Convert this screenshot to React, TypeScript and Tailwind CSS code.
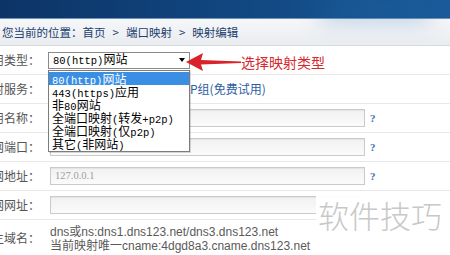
import React from "react";

const cjk = "font-['Noto_Sans_CJK_SC',sans-serif]";

// SimSun-ish look: ascii runs in a mono face, Chinese in the CJK face
const Mixed = ({ text }: { text: string }) => {
  const parts = text.split(/([\x20-\x7e]+)/).filter(Boolean);
  return (
    <>
      {parts.map((p, i) =>
        /^[\x20-\x7e]+$/.test(p) ? (
          <span key={i} className="font-['Liberation_Mono',monospace] text-[10.5px] leading-[13px]">
            {p}
          </span>
        ) : (
          <span key={i} className="leading-[13px]">{p}</span>
        )
      )}
    </>
  );
};

const options = [
  "80(http)网站",
  "443(https)应用",
  "非80网站",
  "全端口映射(转发+p2p)",
  "全端口映射(仅p2p)",
  "其它(非网站)",
];

const Help = () => (
  <span className="ml-[5px] text-[11px] leading-[14px] font-bold text-[#3d6fae] font-['Liberation_Serif',serif]">?</span>
);

const Row = ({
  label,
  children,
  className = "h-[29px]",
}: {
  label: string;
  children?: React.ReactNode;
  className?: string;
}) => (
  <div className={`flex items-center border-b border-[#e8e8e8] ${className}`}>
    <div className="w-[40px] shrink-0 flex justify-end whitespace-nowrap text-[12px] leading-[16px] text-[#555]">
      {label}
    </div>
    <div className="pl-[10px] flex items-center flex-1">{children}</div>
  </div>
);

const Field = ({ value, help = true }: { value?: string; help?: boolean }) => (
  <div className="flex items-center">
    <div className="w-[315px] h-[18px] border border-[#cacaca] bg-linear-to-b from-[#f1f1f1] to-[#fbfbfb] shadow-[inset_0_1px_1px_rgba(0,0,0,0.06)] flex items-center pl-[4px] text-[10.5px] leading-[14px] text-[#a0a0a0] font-['Liberation_Serif',serif]">
      {value}
    </div>
    {help && <Help />}
  </div>
);

export default function App() {
  return (
    <div className={`relative w-[450px] h-[255px] overflow-hidden bg-white ${cjk}`}>
      {/* top banner */}
      <div className="h-[19px] bg-linear-to-r from-[#0c3467] via-[#11467f] to-[#1a5a9a] border-b border-[#6f93bd] relative">
        <div className="absolute left-[320px] top-0 w-[110px] h-[18px] bg-[#2167a6] opacity-40 blur-md" />
      </div>

      {/* breadcrumb */}
      <div className="h-[27px] flex items-center pl-[2px] bg-linear-to-b from-[#f6f7f9] to-[#e9ecf0] border-b border-[#d5dbe3] text-[11.5px] leading-[16px] text-[#21406d] whitespace-nowrap">
        <span>您当前的位置：</span>
        <span>首页</span>
        <span className="mx-[7px]">&gt;</span>
        <span>端口映射</span>
        <span className="mx-[7px]">&gt;</span>
        <span>映射编辑</span>
      </div>

      <Row label="应用类型：">
        <div className="ml-[-2px] w-[142px] h-[17px] border border-[#8a8a8a] bg-white flex items-center justify-between pl-[4px] pr-[4px] text-[12px] text-black">
          <span className="whitespace-nowrap leading-[13px]">
            <Mixed text="80(http)网站" />
          </span>
          <span className="w-0 h-0 border-l-[3px] border-r-[3px] border-t-[4px] border-l-transparent border-r-transparent border-t-black" />
        </div>
      </Row>
      <Row label="映射服务：">
        <span className="ml-[140px] text-[12px] leading-[16px] text-[#2d5d9f] whitespace-nowrap">P组(免费试用)</span>
      </Row>
      <Row label="应用名称：">
        <Field />
      </Row>
      <Row label="内网端口：">
        <Field />
      </Row>
      <Row label="内网地址：">
        <Field value="127.0.0.1" />
      </Row>
      <Row label="外网网址：">
        <Field help={false} />
      </Row>
      <div className="flex items-start pt-[5px]">
        <div className="w-[40px] shrink-0 flex justify-end whitespace-nowrap text-[12px] leading-[16px] text-[#555] pt-[5px]">
          绑定主域名：
        </div>
        <div className="pl-[10px] text-[12px] leading-[14px] text-[#5a5a5a] whitespace-nowrap font-['Liberation_Sans','Noto_Sans_CJK_SC',sans-serif]">
          <div>dns或ns:dns1.dns123.net/dns3.dns123.net</div>
          <div>当前映射唯一cname:4dgd8a3.cname.dns123.net</div>
        </div>
      </div>

      {/* open select list */}
      <div className="absolute left-[48px] top-[70px] w-[142px] border border-[#7c7c7c] bg-white py-[1px] text-[12px] text-black shadow-[1px_1px_0_rgba(0,0,0,0.15)]">
        {options.map((o, i) => (
          <div
            key={o}
            className={`h-[13px] leading-[13px] pl-[3px] whitespace-nowrap ${i === 0 ? "bg-[#3a8fe4] text-white" : ""}`}
          >
            <Mixed text={o} />
          </div>
        ))}
      </div>

      {/* red pointer arrow */}
      <svg className="absolute left-[186px] top-[52px]" width="56" height="20" viewBox="0 0 56 20">
        <polygon points="0,10 17,1 15,8 55,9.4 55,11 15,12.5 17,19" fill="#d8232a" />
      </svg>
      <div className="absolute left-[241px] top-[52px] text-[14px] leading-[20px] text-[#d42a2f] whitespace-nowrap">
        选择映射类型
      </div>

      {/* watermark */}
      <div className="absolute left-[316px] top-[192px] w-[134px] h-[44px] bg-white/95 flex items-center pl-[2px] text-[31px] leading-none text-[#c8c8c8] font-light whitespace-nowrap">
        软件技巧
      </div>
    </div>
  );
}
